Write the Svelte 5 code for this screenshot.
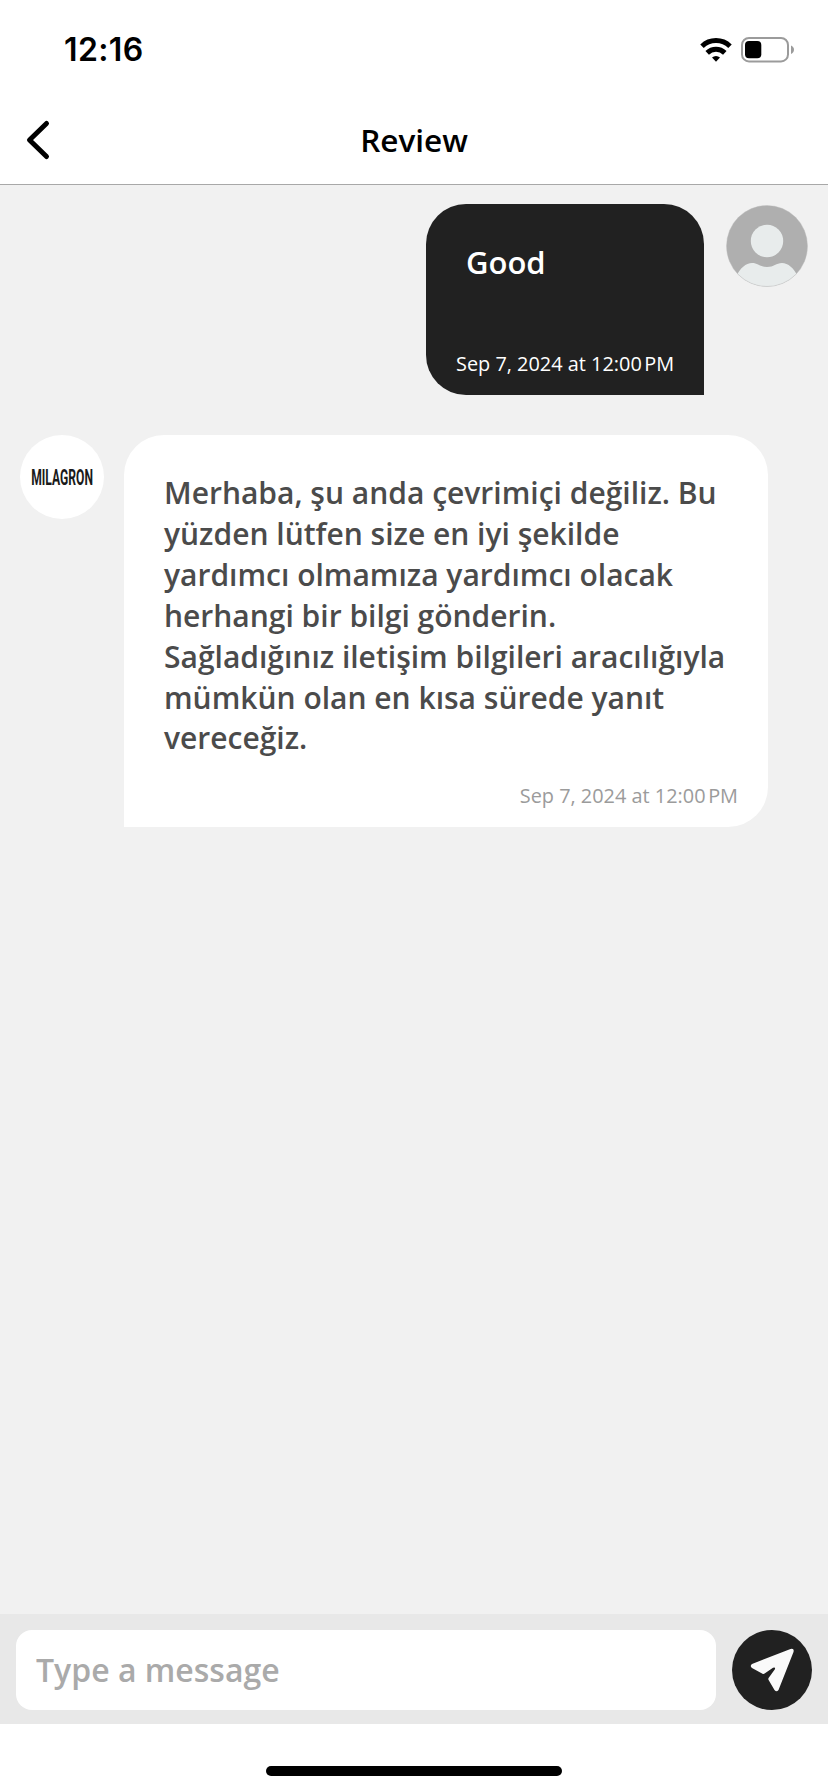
<script>
    let draft = '';

    const messages = [
        {
            id: 1,
            type: 'outgoing',
            text: 'Good',
            date: 'Sep 7, 2024 at 12:00\u202fPM'
        },
        {
            id: 2,
            type: 'incoming',
            text: 'Merhaba, şu anda çevrimiçi değiliz. Bu yüzden lütfen size en iyi şekilde yardımcı olmamıza yardımcı olacak herhangi bir bilgi gönderin. Sağladığınız iletişim bilgileri aracılığıyla mümkün olan en kısa sürede yanıt vereceğiz.',
            date: 'Sep 7, 2024 at 12:00\u202fPM'
        }
    ];
</script>

<div class="screen">
    <div class="status">
        <span class="status__time">12:16</span>
        <div class="status__icons">
            <svg width="32" height="24" viewBox="0 0 32 24" fill="none" stroke="#000" stroke-width="5">
                <path d="M2 8.2a20.2 20.2 0 0 1 28 0"></path>
                <path d="M7.2 14.9a12.6 12.6 0 0 1 17.6 0"></path>
                <path d="M16 23.8l-4-4.2a5.9 5.9 0 0 1 8 0z" fill="#000" stroke="none"></path>
            </svg>
            <svg width="54" height="26" viewBox="0 0 54 26">
                <rect x="1" y="1" width="46" height="23.4" rx="7" fill="none" stroke="#9b9b9b" stroke-width="2"></rect>
                <rect x="4" y="4" width="16.3" height="17.2" rx="4" fill="#000"></rect>
                <path d="M50 8.5c1.9.8 3 2.3 3 4.2s-1.1 3.4-3 4.2z" fill="#9b9b9b"></path>
            </svg>
        </div>
    </div>

    <header class="header">
        <button class="header__back" aria-label="Back">
            <svg width="26" height="42" viewBox="0 0 26 42" fill="none" stroke="#000" stroke-width="5" stroke-linecap="round" stroke-linejoin="round">
                <path d="M21.5 4.5L4.5 21l17 16.5"></path>
            </svg>
        </button>
        <h1 class="header__title">Review</h1>
    </header>

    <main class="chat">
        {#each messages as message (message.id)}
            <div class="message message--{message.type}">
                {#if message.type === 'incoming'}
                    <div class="brand">
                        <span class="brand__name">MILAGRON</span>
                    </div>
                {/if}

                <div class="bubble">
                    <p class="bubble__text">{message.text}</p>
                    <time class="bubble__date">{message.date}</time>
                </div>

                {#if message.type === 'outgoing'}
                    <svg class="avatar" width="82" height="82" viewBox="0 0 82 82">
                        <defs>
                            <clipPath id="avatar-clip"><circle cx="41" cy="41" r="40.5"></circle></clipPath>
                        </defs>
                        <circle cx="41" cy="41" r="40.5" fill="#afafaf"></circle>
                        <circle cx="41" cy="36" r="16.2" fill="#e8ecec"></circle>
                        <path clip-path="url(#avatar-clip)" d="M10 72C14 63 20 58 26 58c6 0 8 4 15 4s9-4 15-4c6 0 12 5 16 14v10H10z" fill="#e8ecec"></path>
                        <circle cx="41" cy="41" r="40.5" fill="none" stroke="#bcbcbc" stroke-opacity=".4"></circle>
                    </svg>
                {/if}
            </div>
        {/each}
    </main>

    <form class="composer" on:submit|preventDefault>
        <input class="composer__input" type="text" placeholder="Type a message" bind:value={draft} />
        <button class="composer__send" aria-label="Send">
            <svg width="80" height="80" viewBox="0 0 80 80">
                <path d="M20 34L58.5 19Q62.5 18 61.5 22L46.5 60Q44.5 62.5 42.5 60L36.6 50Q36 49 36.6 48L42.9 39.3Q43.7 36.7 41 37.7L32.6 43.5Q31.6 44.3 30.5 43.7L20 38Q17.5 35.8 20 34z" fill="#fafafa"></path>
            </svg>
        </button>
    </form>

    <div class="home"></div>
</div>

<style>
    :global(body) {
        margin: 0;
    }

    .screen {
        display: flex;
        flex-direction: column;
        width: 828px;
        height: 1792px;
        overflow: hidden;
        font-family: 'Open Sans', sans-serif;
        color: #000;
        background-color: #fff;
    }

    /* STATUS BAR */
    .status {
        display: flex;
        align-items: center;
        justify-content: space-between;
        box-sizing: border-box;
        height: 98px;
        padding: 2px 33px 0 64px;
    }

    .status__time {
        font-family: Inter, sans-serif;
        font-size: 32px;
        font-weight: 600;
        line-height: 38px;
        letter-spacing: 0.4px;
    }

    .status__icons {
        display: flex;
        align-items: center;
        gap: 9px;
    }

    /* HEADER */
    .header {
        display: grid;
        grid-template-columns: 80px 1fr 80px;
        align-items: center;
        box-sizing: border-box;
        height: 87px;
        padding-bottom: 2px;
        border-bottom: 1px solid #a8a8a8;
    }

    .header__back {
        display: flex;
        padding: 0 0 0 25px;
        border: 0;
        background: none;
    }

    .header__title {
        margin: 0;
        font-size: 31.5px;
        font-weight: 600;
        line-height: 42px;
        text-align: center;
    }

    /* MESSAGES */
    .chat {
        display: flex;
        flex: 1;
        flex-direction: column;
        gap: 40px;
        padding: 19px 20px;
        background-color: #f1f1f1;
    }

    .message {
        display: flex;
        align-items: flex-start;
        gap: 20px;
    }

    .message--outgoing {
        justify-content: flex-end;
        gap: 22px;
    }

    .bubble {
        display: flex;
        flex-direction: column;
        box-sizing: border-box;
        padding: 38px 30px 18px 40px;
        border-radius: 40px;
    }

    .message--outgoing .bubble {
        width: 278px;
        height: 191px;
        padding-left: 30px;
        border-bottom-right-radius: 0;
        color: #fff;
        background-color: #212121;
    }

    .message--incoming .bubble {
        width: 644px;
        height: 392px;
        border-bottom-left-radius: 0;
        color: #4b4b4b;
        background-color: #fff;
    }

    .bubble__text {
        margin: 0;
        padding-right: 10px;
        font-size: 30px;
        font-weight: 600;
        line-height: 40.9px;
    }

    .message--outgoing .bubble__text {
        padding-left: 10px;
        font-size: 31px;
    }

    .bubble__date {
        margin-top: auto;
        font-size: 19.9px;
        line-height: 27px;
        text-align: right;
        white-space: nowrap;
    }

    .message--incoming .bubble__date {
        color: #9b9b9b;
    }

    .avatar {
        margin-top: 1px;
    }

    .brand {
        display: flex;
        align-items: center;
        justify-content: center;
        width: 84px;
        height: 84px;
        border-radius: 50%;
        background-color: #fff;
    }

    .brand__name {
        padding-top: 2px;
        font-family: Roboto, sans-serif;
        font-size: 22px;
        font-weight: 700;
        line-height: 26px;
        color: #1a1a1a;
        transform: scaleX(0.55);
    }

    /* COMPOSER */
    .composer {
        display: flex;
        gap: 16px;
        box-sizing: border-box;
        height: 110px;
        padding: 16px 16px 14px;
        background-color: #e8e8e8;
    }

    .composer__input {
        flex: 1;
        box-sizing: border-box;
        min-width: 0;
        height: 80px;
        padding: 0 20px 2px;
        border: 0;
        border-radius: 16px;
        font: 600 32px/42px 'Open Sans', sans-serif;
        background-color: #fff;
    }

    .composer__input::placeholder {
        color: #aaa;
    }

    .composer__send {
        width: 80px;
        height: 80px;
        padding: 0;
        border: 0;
        border-radius: 50%;
        background-color: #212121;
    }

    .composer__send svg {
        display: block;
    }

    .home {
        width: 296px;
        height: 10px;
        margin: 42px auto 16px;
        border-radius: 5px;
        background-color: #000;
    }
</style>
